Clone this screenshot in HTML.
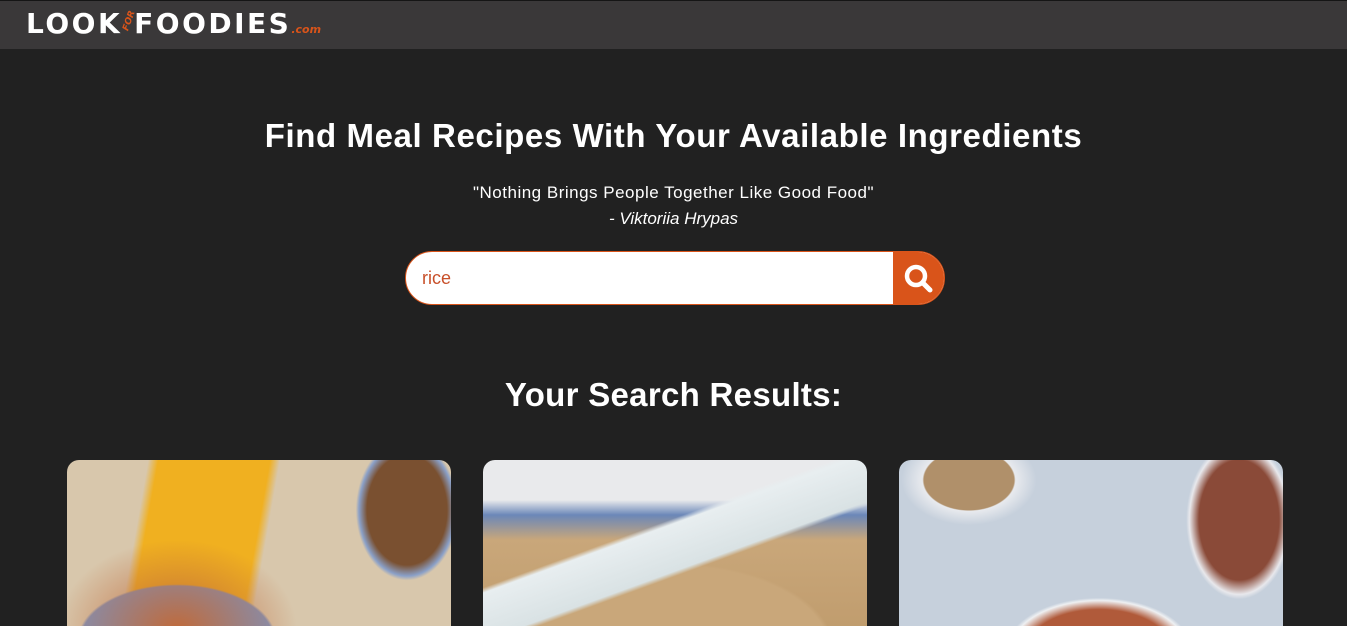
<!DOCTYPE html>
<html><head><style>
*{margin:0;padding:0;box-sizing:border-box}
html,body{width:1347px;height:626px;overflow:hidden}
body{background:#212121;font-family:"Liberation Sans",sans-serif;color:#fff;position:relative}
.hdr{position:absolute;left:0;top:0;width:1347px;height:49px;background:#3a3839;border-top:1px solid #151515}
.logo{position:absolute;left:26px;top:6px;font-weight:bold;font-size:28px;letter-spacing:2.5px;color:#fff;font-family:"DejaVu Sans","Liberation Sans",sans-serif;white-space:nowrap}
.for{display:inline-block;font-size:9px;color:#d9541a;transform:rotate(-70deg);width:12px;font-style:italic;vertical-align:middle;letter-spacing:0}
.com{font-size:11px;color:#d9541a;font-style:italic;letter-spacing:0}
h1{position:absolute;top:117px;width:100%;text-align:center;font-size:33px;font-weight:bold;letter-spacing:0.6px}
.q{position:absolute;top:183px;width:100%;text-align:center;font-size:17px;letter-spacing:0.5px}
.a{position:absolute;top:209px;width:100%;text-align:center;font-size:17px;font-style:italic}
.search{position:absolute;left:405px;top:251px;width:540px;height:54px;border:1px solid #d9541a;border-radius:27px;background:#fff;overflow:hidden}
.search span{position:absolute;left:16px;top:16px;font-size:18px;color:#c8502a}
.btn{position:absolute;right:0;top:0;width:51px;height:54px;background:#d9541a}
h2{position:absolute;top:376px;width:100%;text-align:center;font-size:33px;font-weight:bold;letter-spacing:0.3px}
.card{position:absolute;top:460px;width:384px;height:180px;border-radius:12px;overflow:hidden}
.c1{left:67px;background:
radial-gradient(ellipse 120px 90px at 110px 170px,#c06a3a,transparent),
radial-gradient(ellipse 160px 90px at 110px 180px,#7d93bf 60%,transparent 62%),
radial-gradient(ellipse 80px 110px at 340px 50px,#7a5030 50%,#8aa0c8 60%,transparent 64%),
linear-gradient(100deg,transparent 80px,#f0b020 90px,#f0b020 200px,transparent 210px),
#d8c7ac}
.c2{left:483px;background:
linear-gradient(160deg,transparent 120px,#e8eef0 125px,#d9e2e4 170px,transparent 175px),
radial-gradient(ellipse 260px 140px at 190px 190px,#c9a77a 60%,transparent 62%),
linear-gradient(180deg,#e9eaec 0,#e9eaec 40px,#6b87b8 55px,#c9a77a 80px,#bf9b6c)}
.c3{left:899px;background:
radial-gradient(ellipse 75px 50px at 70px 20px,#b0906a 60%,#e8eaee 62%,transparent 90%),
radial-gradient(ellipse 80px 120px at 340px 60px,#8a4a38 50%,#e8e8ec 62%,transparent 66%),
radial-gradient(ellipse 160px 90px at 200px 190px,#b05a3a 45%,#eef0f2 55%,transparent 58%),
#c6d0dc}
</style></head><body>
<div class="hdr"><div class="logo">LOOK<span class="for">FOR</span>FOODIES<span class="com">.com</span></div></div>
<h1>Find Meal Recipes With Your Available Ingredients</h1>
<div class="q">"Nothing Brings People Together Like Good Food"</div>
<div class="a">- Viktoriia Hrypas</div>
<div class="search"><span>rice</span><div class="btn"><svg width="51" height="54" viewBox="0 0 51 54"><circle cx="23" cy="24" r="9" fill="none" stroke="#fff" stroke-width="4.5"/><line x1="30" y1="31" x2="37" y2="38" stroke="#fff" stroke-width="5" stroke-linecap="round"/></svg></div></div>
<h2>Your Search Results:</h2>
<div class="card c1"></div><div class="card c2"></div><div class="card c3"></div>
</body></html>
